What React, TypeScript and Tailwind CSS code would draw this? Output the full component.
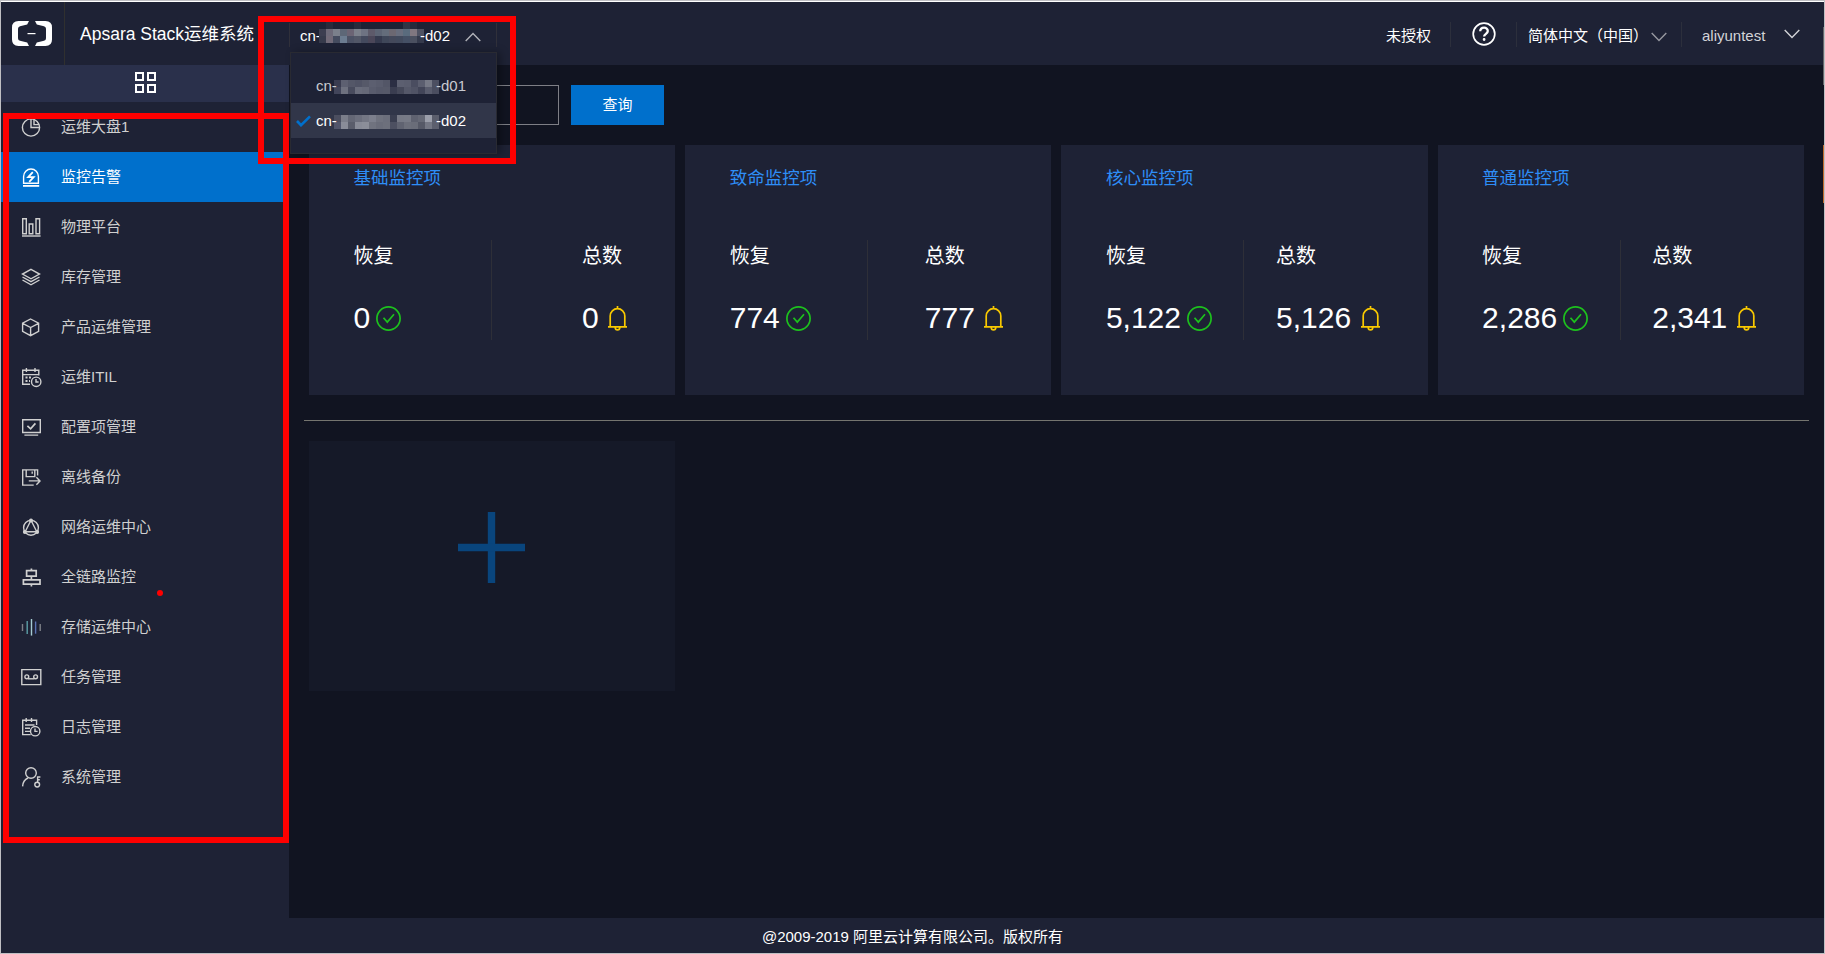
import type { ReactNode } from 'react';

type MenuItem = { label: string; icon: ReactNode; active?: boolean };
type Card = { title: string; recovered: string; total: string };

const menu: MenuItem[] = [
    {
        label: '运维大盘1',
        icon: (
            <>
                <circle cx="10" cy="10.5" r="8.6" />
                <path d="M10 2v8.5h8.6M13 2.5V7.6h5" />
            </>
        ),
    },
    {
        label: '监控告警',
        active: true,
        icon: (
            <>
                <path d="M2.6 16.2V9.4a7.4 7.4 0 0 1 14.8 0v6.8z" />
                <path d="M2 18.9h16.2" strokeWidth="1.8" />
                <path d="M11.8 5.2 7.2 10.2h5.4l-4.4 4.6" strokeWidth="1.8" />
            </>
        ),
    },
    {
        label: '物理平台',
        icon: (
            <>
                <path d="M1.7 1.8h3.6v14.9H1.7zM8.2 7h3.6v9.7H8.2zM15 1.8h3.6v14.9H15z" />
                <path d="M1 19h18.6" />
            </>
        ),
    },
    {
        label: '库存管理',
        icon: (
            <>
                <path d="m10 2.4 8.5 4.7-8.5 4.7-8.5-4.7z" />
                <path d="m1.5 10 8.5 4.6 8.5-4.6M1.5 13l8.5 4.8 8.5-4.8" />
            </>
        ),
    },
    { label: '产品运维管理', icon: <path d="m9.6 2 8 4.1v8.3l-8 4.3-8-4.3V6.1zM1.6 6.3l8 4.2 8-4.2M9.6 10.5v8" /> },
    {
        label: '运维ITIL',
        icon: (
            <>
                <path d="M17.8 8.5V3.3H1.7v13.9H9M1.7 7.6h16.1M5.4 1v4M14 1v4" />
                <path d="M4.5 10.5h2M8 10.5h2M4.5 14h2M8 14h1" strokeWidth="2" />
                <circle cx="15.2" cy="14.8" r="4.7" />
                <path d="M15 12v3h2.6" />
            </>
        ),
    },
    {
        label: '配置项管理',
        icon: (
            <>
                <path d="M1.7 2.7h17.6v12.8H1.7zM3.4 18.1h13.8" />
                <path d="m6.4 8.9 3.2 3L14.4 6.4" strokeWidth="1.7" />
            </>
        ),
    },
    {
        label: '离线备份',
        icon: (
            <>
                <path d="M16.6 8.5V2.9H1.7v15.2h11" />
                <path d="M5.2 3v6.6h8.6V3M11.2 4.4v2.4M7.8 13.9h11M15.4 10.2l3.6 3.7-3.6 3.8" />
            </>
        ),
    },
    {
        label: '网络运维中心',
        icon: (
            <>
                <circle cx="10" cy="10.8" r="7.4" />
                <path d="M10 3.2 4.2 14.8h11.6z" />
                <circle cx="10" cy="3.6" r="1.3" fill="currentColor" />
                <circle cx="3.8" cy="15" r="1.2" fill="currentColor" />
                <circle cx="16.2" cy="15" r="1.2" fill="currentColor" />
            </>
        ),
    },
    { label: '全链路监控', icon: <path d="M5.6 3.6h9.6v5.6H5.6zM2.4 12.8h16.6v4.4H2.4zM10.4 1.4v2.2M10.4 9.2v3.6M10.4 17.2v2.4" strokeWidth="1.7" /> },
    {
        label: '存储运维中心',
        icon: (
            <>
                <path d="M1.5 7v7M19.2 7v7" stroke="#7e8188" />
                <path d="M6.2 3.9v13" stroke="#5c9fa8" />
                <path d="M10.5 2v16.6" stroke="#a5cbd3" />
                <path d="M14.6 4.5v12.2" stroke="#5a74b4" />
            </>
        ),
    },
    {
        label: '任务管理',
        icon: (
            <>
                <path d="M.8 2.6h19v15H.8z" />
                <circle cx="5.8" cy="9.8" r="1.9" />
                <circle cx="14.6" cy="9.8" r="1.9" />
                <path d="M7 11.8h6.4" />
            </>
        ),
    },
    {
        label: '日志管理',
        icon: (
            <>
                <path d="M15.6 8V3.2H1.7v14.4h8M5.2 1v4M10.5 1v4M4 8h9.5M4 11.2h5M4 14.4h5" />
                <circle cx="14.2" cy="14.2" r="4.7" />
                <path d="M14 11.4v3h2.6" />
            </>
        ),
    },
    {
        label: '系统管理',
        icon: (
            <>
                <circle cx="10" cy="6" r="5.3" />
                <path d="M1.6 19.4c.2-4.2 2.2-7 5.4-8.4" />
                <circle cx="16.2" cy="17.6" r="2.4" />
                <path d="M16.6 15V10h2.8M16.8 12.8h2" />
            </>
        ),
    },
];

const cards: Card[] = [
    { title: '基础监控项', recovered: '0', total: '0' },
    { title: '致命监控项', recovered: '774', total: '777' },
    { title: '核心监控项', recovered: '5,122', total: '5,126' },
    { title: '普通监控项', recovered: '2,286', total: '2,341' },
];

// Masked part of a region id, one colour per 7px block
const triggerMask = [
    '#1e2235 #282b3c #1e2235 #1e2235 #1e2235 #282b3c #1e2235 #1e2235 #1e2235 #1e2235 #1e2235 #1e2235 #303546 #262a3c #1e2235',
    '#3c3e50 #6d6a79 #7b808b #5d6777 #6b6474 #7b808b #6e7383 #5d5a6a #5c6474 #646d7b #6c6872 #686d7d #5a6b7d #807780 #4f5263',
    '#363a4b #716a78 #454c5f #6c7c90 #4c5265 #525767 #444a5e #4b4759 #353a4e #3f4759 #44495b #424a5d #455065 #4b5060 #353a4c',
];
const firstMask = [
    '#3a3c50 #5d6071 #545768 #505365 #565969 #5c5f70 #595c6d #535667 #2b2e43 #5c5f70 #5a5d6e #4a4d60 #5b5e6f #767986 #4c4f61',
    '#42455a #6e717f #484b5d #696c7b #666978 #595c6d #555869 #565969 #3a3d50 #454859 #555869 #505365 #424558 #595c6d #4b4e60',
];
const secondMask = [
    '#4b4e5f #7b7e8a #646775 #6c6f7d #747784 #7c7f8c #70737f #6c6f7c #3a3e50 #767985 #777a86 #5f6270 #666976 #9b9eaa #5b5e6c',
    '#52556a #898c98 #5a5d6b #888b97 #8b8e99 #70737f #6a6d7a #6d707c #4d5061 #606371 #6c6f7b #6a6d79 #565967 #747784 #5c5f6e',
];

function Mask({ rows }: { rows: string[] }) {
    return (
        <svg width="105" height={rows.length * 7} shapeRendering="crispEdges" className="shrink-0">
            {rows.map((row, y) =>
                row.split(' ').map((fill, x) => <rect key={`${x}-${y}`} x={x * 7} y={y * 7} width="7" height="7" fill={fill} />)
            )}
        </svg>
    );
}

function Chevron({ up = false, className = '' }: { up?: boolean; className?: string }) {
    return (
        <svg width="16" height="10" viewBox="0 0 16 10" fill="none" stroke="currentColor" strokeWidth="1.4" className={className}>
            <path d={up ? 'm.7 9 7.3-7.5L15.3 9' : 'm.7 1 7.3 7.5L15.3 1'} />
        </svg>
    );
}

function Header() {
    return (
        <header className="flex h-[63px] shrink-0 bg-[#1e2235] text-[15px] text-white">
            <div className="flex w-16 justify-center border-r border-[#30302f] pt-[19px] pr-px">
                <svg width="40" height="25" viewBox="0 0 40 25" fill="white">
                    <path d="M17 0H6.500Q0 0 0 6.500v12Q0 25 6.500 25H17l-1.800-3.600L8 19.700Q6 19.200 6 17.200V7.800Q6 5.800 8 5.300l7.200-1.700z" />
                    <path d="M23 0h10.500Q40 0 40 6.500v12Q40 25 33.500 25H23l1.800-3.600 7.200-1.700q2-.5 2-2.500V7.800q0-2-2-2.500l-7.200-1.700z" />
                    <path d="M15.500 12h8v1.200h-8z" />
                </svg>
            </div>
            <h1 className="w-[224px] pl-[15px] text-[17.5px] leading-[65px] whitespace-nowrap">Apsara Stack运维系统</h1>

            {/* Region switcher */}
            <div className="relative mt-[21px] h-6 w-[208px] border-x border-[#30303a]">
                <div className="flex h-6 items-center pl-[10px] leading-6">
                    <span className="w-[19px] pt-px">cn-</span>
                    <div className="-mt-[5px]"><Mask rows={triggerMask} /></div>
                    <span className="relative -ml-1 pt-px">-d02</span>
                    <Chevron up className="mt-[3px] ml-auto mr-[15px] text-[#b0b1b8]" />
                </div>
                <ul className="absolute top-[29px] left-0 z-10 h-[102px] w-[207px] border border-[#292a32] bg-[#1e2235] pt-[15px] shadow-[4px_0_8px_rgba(0,0,0,0.3)]">
                    <li className="flex h-[35px] items-center pl-[25px] text-[#c9cad0]">
                        <span className="relative w-[18px] pt-px">cn-</span>
                        <div className="pt-[3px]"><Mask rows={firstMask} /></div>
                        <span className="relative -ml-[3px] pt-px">-d01</span>
                    </li>
                    <li className="flex h-[35px] items-center bg-[#313649] pl-[5px]">
                        <svg width="15" height="12" viewBox="0 0 15 12" fill="none" stroke="#0070cc" strokeWidth="2.6">
                            <path d="m1 6 4 4.200L14 1.300" />
                        </svg>
                        <span className="relative ml-[5px] w-[18px] pt-px">cn-</span>
                        <div className="pt-[3px]"><Mask rows={secondMask} /></div>
                        <span className="relative -ml-[3px] pt-px">-d02</span>
                    </li>
                </ul>
            </div>

            <div className="ml-auto flex h-[63px] items-start pt-[20px]">
                <span className="leading-[28px]">未授权</span>
                <div className="ml-[19px] h-[25px] w-px bg-[#2c2f3c]" />
                <svg width="24" height="24" viewBox="0 0 24 24" fill="none" stroke="white" className="ml-[21px]">
                    <circle cx="12" cy="12" r="10.800" strokeWidth="1.700" />
                    <path d="M8.200 9.300c.2-4.800 7.700-4.700 7.600-.2 0 2.700-3.700 2.800-3.700 5.500" strokeWidth="2.300" />
                    <circle cx="12.100" cy="17.500" r=".8" strokeWidth="1.200" fill="white" />
                </svg>
                <div className="ml-5 h-[25px] w-px bg-[#2c2f3c]" />
                <span className="ml-[11px] w-[123px] leading-[28px]">简体中文（中国）</span>
                <Chevron className="mt-[10px] text-[#9798a0]" />
                <div className="ml-[14px] h-[25px] w-px bg-[#2c2f3c]" />
                <span className="ml-5 w-[82px] leading-[27px] text-[#d2d3d7]">aliyuntest</span>
                <Chevron className="mt-[7px] mr-6 text-[#d2d3d7]" />
            </div>
        </header>
    );
}

function Sidebar() {
    return (
        <aside className="w-72 shrink-0 bg-[#1e2235]">
            <div className="flex h-[37px] items-center justify-center bg-[#2a304b]">
                <div className="grid grid-cols-2 gap-[3px] pb-[2px]">
                    <span className="size-[9px] border-2 border-white" />
                    <span className="size-[9px] border-2 border-white" />
                    <span className="size-[9px] border-2 border-white" />
                    <span className="size-[9px] border-2 border-white" />
                </div>
            </div>
            <nav>
                {menu.map((item) => (
                    <a key={item.label} className={item.active ? 'flex h-[50px] items-center bg-[#0070cc] pl-5 text-white' : 'flex h-[50px] items-center pl-5 text-[#d0d0d0]'}>
                        <svg width="21" height="20" viewBox="0 0 21 20" fill="none" stroke="currentColor" strokeWidth="1.4" className="overflow-visible">
                            {item.icon}
                        </svg>
                        <span className="ml-[19px] text-[15px]">{item.label}</span>
                    </a>
                ))}
            </nav>
        </aside>
    );
}

function StatCard({ title, recovered, total }: Card) {
    return (
        <section className="h-[250px] bg-[#1e2235] pt-[20px] pr-[45px] pl-[44.5px] text-white">
            <h2 className="text-[17.5px] leading-[26px] text-[#2e8ef7]">{title}</h2>
            <div className="mt-[49px] flex">
                <div className="h-[100px] w-[138.5px] shrink-0 border-r border-[#2e2f38]">
                    <p className="pt-px text-xl leading-[30px]">恢复</p>
                    <div className="mt-[26px] flex h-10 items-center gap-[6px]">
                        <span className="text-[30px]">{recovered}</span>
                        <svg width="25" height="25" viewBox="0 0 25 25" fill="none" stroke="#1dc11d" strokeWidth="1.700" className="mt-[2px]">
                            <circle cx="12.500" cy="12.500" r="11.600" />
                            <path d="m7.500 11.800 3.800 4.300L18 8.300" />
                        </svg>
                    </div>
                </div>
                <div className="ml-auto">
                    <p className="pt-px text-xl leading-[30px]">总数</p>
                    <div className="mt-[26px] flex h-10 items-center gap-[6.5px]">
                        <span className="text-[30px]">{total}</span>
                        <svg width="25" height="25" viewBox="0 0 25 25" fill="none" stroke="#f9c900" strokeWidth="1.700" className="mt-[2px]">
                            <path d="M12.500 0v2.500M5.200 20.800V10a7.300 7.300 0 0 1 14.600 0v10.800M3 20.900h19M10.200 21.200a2.300 2.700 0 0 0 4.600 0" />
                        </svg>
                    </div>
                </div>
            </div>
        </section>
    );
}

export default function App() {
    return (
        <div className="relative h-[954px] w-[1825px] overflow-hidden border border-[#bfbfc3] font-['Liberation_Sans','Noto_Sans_CJK_SC',sans-serif]">
            <div className="flex h-full flex-col border-t border-white bg-[#111421]">
                <Header />
                <div className="flex min-h-0 flex-1">
                    <Sidebar />
                    <main className="min-w-0 flex-1 px-[15px] pt-5">
                        <div className="flex h-10 gap-3 pl-[35px]">
                            <input className="w-[220px] border border-[#7e7f86]" />
                            <button className="w-[93px] bg-[#0070cc] text-[15px] text-white">查询</button>
                        </div>
                        <div className="mt-5 grid grid-cols-4 gap-[10px] pr-[5.2px] pl-[5px]">
                            {cards.map((card) => <StatCard key={card.title} {...card} />)}
                        </div>
                        <hr className="mt-[25px] border-[#75756f]" />
                        <div className="mt-5 ml-[5px] flex h-[250px] w-[366px] justify-center bg-[#151928] pt-[71px] pr-px">
                            <svg width="67" height="71" viewBox="0 0 67 71" fill="#09457d">
                                <path d="M29.800 0h7.400v71h-7.400z" />
                                <path d="M0 31.800h67v7.400H0z" />
                            </svg>
                        </div>
                    </main>
                </div>
                <footer className="h-[35px] shrink-0 bg-[#1e2235] text-center text-[15px] leading-[37px] text-white">
                    @2009-2019 阿里云计算有限公司。版权所有
                </footer>
            </div>

            {/* Highlight frames */}
            <div className="absolute top-[112px] left-[2px] h-[730px] w-[286px] border-[6px] border-[#fe0000]" />
            <div className="absolute top-[15px] left-[257px] z-20 h-[148px] w-[258px] border-[6px] border-[#fe0000]" />
            <div className="absolute top-[589px] left-[156px] size-[6px] rounded-full bg-[#fe0000]" />
            <div className="absolute top-[26px] right-0 h-[58px] w-px bg-[#66676b]" />
            <div className="absolute top-[144px] right-0 h-[58px] w-px bg-[#c06a2c]" />
        </div>
    );
}
